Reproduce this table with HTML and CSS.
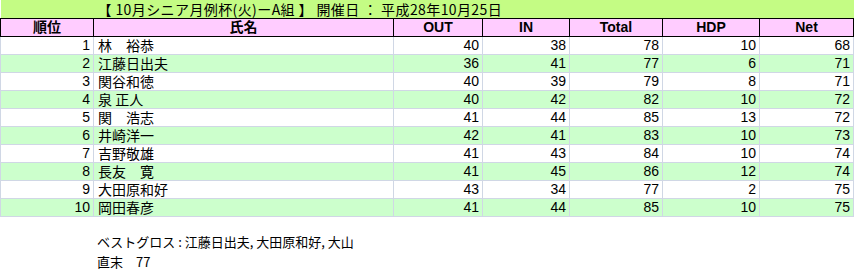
FILE: index.html
```html
<!DOCTYPE html>
<html lang="ja">
<head>
<meta charset="utf-8">
<title>10月シニア月例杯</title>
<link rel="stylesheet" href="styles.css">
</head>
<body>
<table class="score">
  <colgroup>
    <col class="c-rank"><col class="c-name"><col class="c-out"><col class="c-in"><col class="c-total"><col class="c-hdp"><col class="c-net">
  </colgroup>
  <tr class="title"><td colspan="7">【 10月シニア月例杯(火)ーA組 】 開催日 ： 平成28年10月25日</td></tr>
  <tr class="head"><th>順位</th><th>氏名</th><th>OUT</th><th>IN</th><th>Total</th><th>HDP</th><th>Net</th></tr>
  <tr><td class="num">1</td><td class="name">林　裕恭</td><td class="num">40</td><td class="num">38</td><td class="num">78</td><td class="num">10</td><td class="num">68</td></tr>
  <tr class="alt"><td class="num">2</td><td class="name">江藤日出夫</td><td class="num">36</td><td class="num">41</td><td class="num">77</td><td class="num">6</td><td class="num">71</td></tr>
  <tr><td class="num">3</td><td class="name">関谷和徳</td><td class="num">40</td><td class="num">39</td><td class="num">79</td><td class="num">8</td><td class="num">71</td></tr>
  <tr class="alt"><td class="num">4</td><td class="name">泉 正人</td><td class="num">40</td><td class="num">42</td><td class="num">82</td><td class="num">10</td><td class="num">72</td></tr>
  <tr><td class="num">5</td><td class="name">関　浩志</td><td class="num">41</td><td class="num">44</td><td class="num">85</td><td class="num">13</td><td class="num">72</td></tr>
  <tr class="alt"><td class="num">6</td><td class="name">井崎洋一</td><td class="num">42</td><td class="num">41</td><td class="num">83</td><td class="num">10</td><td class="num">73</td></tr>
  <tr><td class="num">7</td><td class="name">吉野敬雄</td><td class="num">41</td><td class="num">43</td><td class="num">84</td><td class="num">10</td><td class="num">74</td></tr>
  <tr class="alt"><td class="num">8</td><td class="name">長友　寛</td><td class="num">41</td><td class="num">45</td><td class="num">86</td><td class="num">12</td><td class="num">74</td></tr>
  <tr><td class="num">9</td><td class="name">大田原和好</td><td class="num">43</td><td class="num">34</td><td class="num">77</td><td class="num">2</td><td class="num">75</td></tr>
  <tr class="alt"><td class="num">10</td><td class="name">岡田春彦</td><td class="num">41</td><td class="num">44</td><td class="num">85</td><td class="num">10</td><td class="num">75</td></tr>
</table>
<div class="notes">
  <p>ベストグロス : 江藤日出夫, 大田原和好, 大山</p>
  <p>直末　77</p>
</div>
</body>
</html>
```

FILE: styles.css
```css
html, body {
  margin: 0;
  padding: 0;
  background: #ffffff;
}
body {
  font-family: "Liberation Sans", "Noto Sans CJK JP", sans-serif;
  font-size: 14px;
  color: #000000;
}
.score {
  border-collapse: collapse;
  table-layout: fixed;
  width: 853px;
}
.c-rank { width: 93px; }
.c-name { width: 300px; }
.c-out { width: 89px; }
.c-in { width: 87px; }
.c-total { width: 93px; }
.c-hdp { width: 97px; }
.c-net { width: 94px; }
.score td, .score th {
  height: 17px;
  padding: 0;
  line-height: 17px;
  white-space: nowrap;
  overflow: hidden;
  border: 1px solid #d0d7e5;
}
.title td {
  background: #c4fc84;
  border: none;
  height: 18px;
  padding-left: 97px;
  font-family: "Noto Sans CJK JP", sans-serif;
  font-size: 14px;
  line-height: 18px;
  letter-spacing: 0.4px;
  overflow: visible;
}
.head th {
  background: #ffccff;
  border: 1px solid #000000;
  font-weight: bold;
  text-align: center;
  font-family: "Liberation Sans", "Noto Sans CJK JP", sans-serif;
  font-size: 14px;
  line-height: 17px;
}
.alt td {
  background: #ccffcc;
}
.num {
  text-align: right;
  padding-right: 3px !important;
}
.name {
  text-align: left;
  padding-left: 4px !important;
  font-family: "Noto Sans CJK JP", sans-serif;
}
.notes {
  padding: 15px 0 0 97px;
  font-family: "Noto Sans CJK JP", sans-serif;
  font-size: 13px;
  line-height: 20px;
}
.notes p {
  margin: 0;
}
```
